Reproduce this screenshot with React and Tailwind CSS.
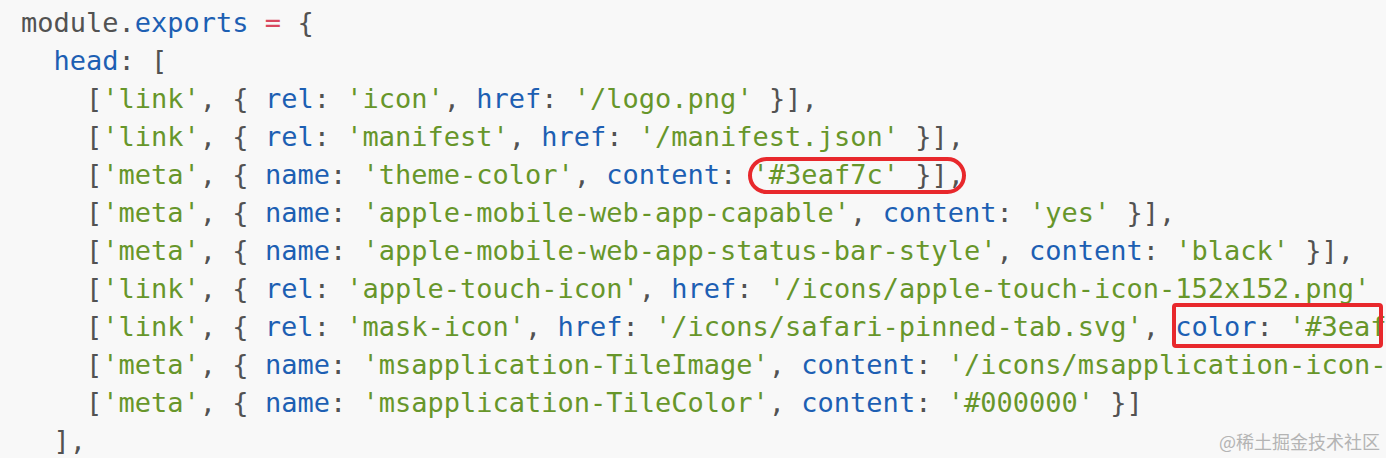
import React from 'react';

const P = ({ children }) => <span className="text-[#525252]">{children}</span>;
const K = ({ children }) => <span className="text-[#1d5fb3]">{children}</span>;
const S = ({ children }) => <span className="text-[#67962a]">{children}</span>;

const Entry = ({ tag, k1, v1, k2, v2, tail = ' }],' }) => (
    <div>
        <P>{'    ['}</P><S>'{tag}'</S><P>{', { '}</P><K>{k1}</K><P>{': '}</P><S>'{v1}'</S><P>{', '}</P>
        <K>{k2}</K><P>{': '}</P><S>'{v2}'</S><P>{tail}</P>
    </div>
);

const App = () => {
    return (
        <div className="relative w-[1386px] h-[458px] overflow-hidden bg-[#f8f8f8]">
            <div className="pl-[21px] pt-[4px] whitespace-pre text-[27px] leading-[38px] font-['DejaVu_Sans_Mono',monospace]">
                <div><P>module.</P><K>exports</K> <span className="text-[#d9485f]">=</span><P>{' {'}</P></div>
                <div><P>{'  '}</P><K>head</K><P>{': ['}</P></div>
                <Entry tag="link" k1="rel" v1="icon" k2="href" v2="/logo.png" />
                <Entry tag="link" k1="rel" v1="manifest" k2="href" v2="/manifest.json" />
                <Entry tag="meta" k1="name" v1="theme-color" k2="content" v2="#3eaf7c" />
                <Entry tag="meta" k1="name" v1="apple-mobile-web-app-capable" k2="content" v2="yes" />
                <Entry tag="meta" k1="name" v1="apple-mobile-web-app-status-bar-style" k2="content" v2="black" />
                <Entry tag="link" k1="rel" v1="apple-touch-icon" k2="href" v2="/icons/apple-touch-icon-152x152.png" />
                <div>
                    <P>{'    ['}</P><S>'link'</S><P>{', { '}</P><K>rel</K><P>{': '}</P><S>'mask-icon'</S><P>{', '}</P>
                    <K>href</K><P>{': '}</P><S>'/icons/safari-pinned-tab.svg'</S><P>{', '}</P>
                    <K>color</K><P>{': '}</P><S>'#3eaf7c'</S><P>{' }],'}</P>
                </div>
                <Entry tag="meta" k1="name" v1="msapplication-TileImage" k2="content" v2="/icons/msapplication-icon-144x144.png" />
                <Entry tag="meta" k1="name" v1="msapplication-TileColor" k2="content" v2="#000000" tail=" }]" />
                <div><P>{'  ],'}</P></div>
            </div>

            {/* annotation marks */}
            <div className="absolute left-[748px] top-[157px] w-[218px] h-[37px] rounded-full border-[4px] border-[#e8282c]" />
            <div className="absolute left-[1172px] top-[303px] w-[211px] h-[45px] rounded-[4px] border-[4px] border-[#e8282c]" />

            <div className="absolute right-[6px] bottom-[6px] text-[18px] leading-[22px] text-[#b4b4b4] font-['Noto_Sans_CJK_SC',sans-serif]">
                @稀土掘金技术社区
            </div>
        </div>
    );
};

export default App;
